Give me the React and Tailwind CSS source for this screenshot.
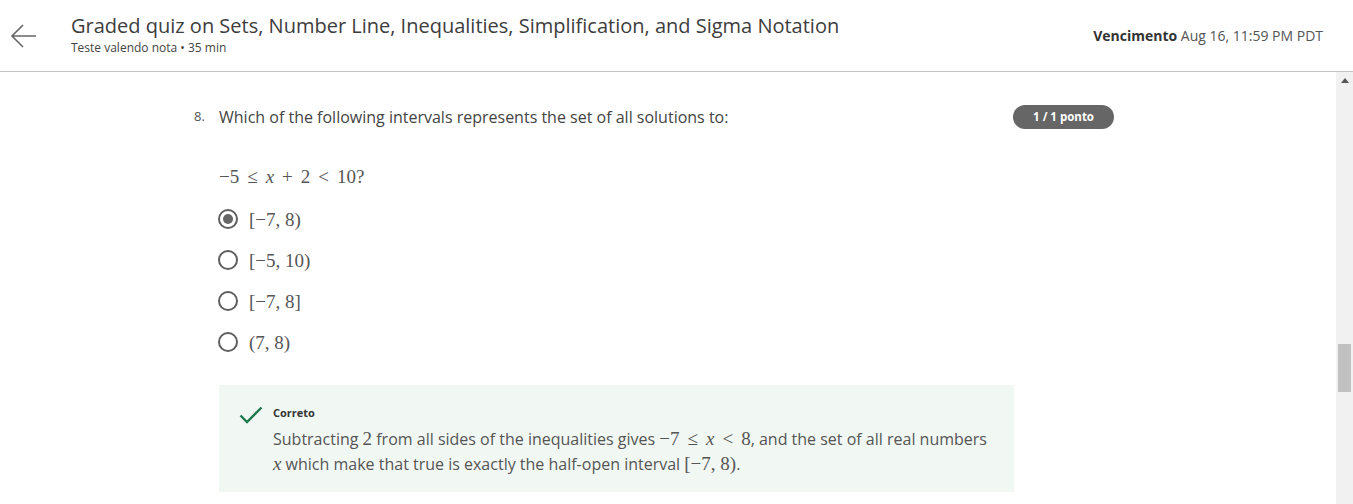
import React from "react";

function Radio({ checked }) {
  return (
    <span className="flex h-[20px] w-[20px] items-center justify-center rounded-full border-2 border-[#5f5f5f] bg-white">
      {checked && <span className="h-[10px] w-[10px] rounded-full bg-[#666]" />}
    </span>
  );
}

function M({ children }) {
  return <span className="font-['Liberation_Serif',serif] text-[19px] leading-none text-[#555]">{children}</span>;
}

function V({ children }) {
  return <span className="italic">{children}</span>;
}

function Op({ children }) {
  return <span className="mx-[8px]">{children}</span>;
}

const options = [
  { label: "[−7, 8)", checked: true },
  { label: "[−5, 10)" },
  { label: "[−7, 8]" },
  { label: "(7, 8)" },
];

export default function App() {
  return (
    <div className="flex h-[504px] w-full flex-col overflow-hidden bg-white font-['Open_Sans',sans-serif] text-[#373a3c]">
      <header className="flex h-[72px] shrink-0 items-center border-b border-[#c4c4c4] pr-[30px]">
        <div className="flex w-[71px] shrink-0 justify-center pr-[24px]">
          <svg width="28" height="26" viewBox="0 0 28 26" fill="none" stroke="#666" strokeWidth="1.6">
            <path d="M26 13H2M13 2L2 13l11 11" />
          </svg>
        </div>
        <div className="flex flex-1 flex-col pb-[2px]">
          <h1 className="text-[20px] leading-[26px] text-[#3d3d3d]">
            Graded quiz on Sets, Number Line, Inequalities, Simplification, and Sigma Notation
          </h1>
          <p className="text-[12px] leading-[18px] text-[#444]">Teste valendo nota • 35 min</p>
        </div>
        <div className="text-[14px] text-[#555]">
          <span className="font-bold text-[#333]">Vencimento</span> Aug 16, 11:59 PM PDT
        </div>
      </header>
      <div className="flex min-h-0 flex-1">
        <main className="flex-1 pt-[33px] pl-[194px]">
          <div className="flex w-[920px] items-start">
            <span className="w-[25px] pt-[2px] text-[13px] text-[#555]">8.</span>
            <p className="flex-1 text-[16px] leading-[24px] text-[#444]">
              Which of the following intervals represents the set of all solutions to:
            </p>
            <span className="rounded-full bg-[#666] px-[20px] py-[4px] text-[11.5px] font-bold leading-[16px] text-white">
              1 / 1 ponto
            </span>
          </div>
          <div className="mt-[36px] h-[24px] pl-[25px]">
            <M>
              −5<Op>≤</Op>
              <V>x</V>
              <Op>+</Op>2<Op>&lt;</Op>10?
            </M>
          </div>
          <div className="mt-[18px] flex flex-col gap-[17px] pl-[24px]">
            {options.map((o) => (
              <div key={o.label} className="flex h-[24px] items-center gap-[11px]">
                <Radio checked={o.checked} />
                <M>{o.label}</M>
              </div>
            ))}
          </div>
          <div className="mt-[31px] ml-[25px] flex w-[795px] gap-[10px] bg-[#f1f7f3] px-[20px] pt-[20px] pb-[15px]">
            <svg width="24" height="18" viewBox="0 0 24 18" fill="none" stroke="#1f7a4d" strokeWidth="2.4" className="mt-[1px]">
              <path d="M1.5 9.5l6.5 6.5L22.5 1.5" />
            </svg>
            <div className="flex-1">
              <p className="text-[11px] font-bold leading-[16px] text-[#333]">Correto</p>
              <p className="mt-[6px] text-[16px] leading-[25px] text-[#555]">
                Subtracting <M>2</M> from all sides of the inequalities gives{" "}
                <M>
                  −7<Op>≤</Op>
                  <V>x</V>
                  <Op>&lt;</Op>8
                </M>
                , and the set of all real numbers{" "}
                <M>
                  <V>x</V>
                </M>{" "}
                which make that true is exactly the half-open interval <M>[−7, 8)</M>.
              </p>
            </div>
          </div>
        </main>
        <div className="flex w-[17px] shrink-0 flex-col items-center bg-[#f1f1f1]">
          <div className="flex h-[17px] w-full items-center justify-center">
            <span className="h-0 w-0 border-x-[4px] border-b-[5px] border-x-transparent border-b-[#555]" />
          </div>
          <div className="mt-[255px] h-[48px] w-[13px] bg-[#c1c1c1]" />
        </div>
      </div>
    </div>
  );
}
